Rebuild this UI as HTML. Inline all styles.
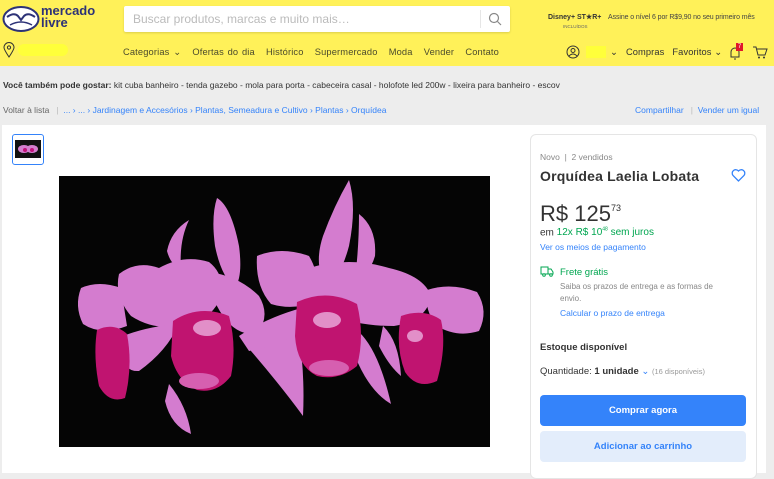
<!DOCTYPE html>
<html><head><meta charset="utf-8"><style>
*{margin:0;padding:0;box-sizing:border-box}
body{width:774px;height:473px;overflow:hidden;background:#ededed;font-family:"Liberation Sans",sans-serif;position:relative;color:#333}
.hdr{position:absolute;left:0;top:0;width:774px;height:66px;background:#fff159}
.a{position:absolute;white-space:nowrap}
.search{position:absolute;left:124px;top:6px;width:386px;height:26px;background:#fff;border-radius:2px;box-shadow:0 1px 2px rgba(0,0,0,.15)}
.nav{font-size:9.3px;color:#4b4b2c}
.panel{position:absolute;left:2px;top:125px;width:764px;height:348px;background:#fff}
.card{position:absolute;left:530px;top:134px;width:227px;height:345px;border:1px solid #e5e5e5;border-radius:6px;background:#fff}
.blue{color:#3483fa}
</style></head><body>
<div class="hdr"></div>
<svg class="a" style="left:2px;top:5px" width="38" height="28" viewBox="0 0 38 28"><ellipse cx="19" cy="14" rx="17.5" ry="12" fill="#fff" stroke="#2d3277" stroke-width="2"/><path d="M5 12 Q12 7 16 11 L19 15 L22 11 Q26 7 33 12" fill="none" stroke="#2d3277" stroke-width="2"/><path d="M8 20 Q19 14 30 20" fill="none" stroke="#2d3277" stroke-width="1.5"/></svg>
<div class="a" style="left:41px;top:5px;font-size:13px;line-height:12px;color:#2d3277;font-weight:bold">mercado<br>livre</div>
<div class="search"><span class="a" style="left:9px;top:6px;font-size:12px;color:#bbb">Buscar produtos, marcas e muito mais…</span><div class="a" style="left:356px;top:4px;width:1px;height:18px;background:#e6e6e6"></div><svg class="a" style="left:364px;top:6px" width="14" height="14"><circle cx="6" cy="6" r="4.5" fill="none" stroke="#888" stroke-width="1.2"/><path d="M9.5 9.5 L13 13" stroke="#888" stroke-width="1.2"/></svg></div>
<div class="a" style="left:548px;top:13px;font-size:7px;color:#333;font-weight:bold">Disney+ ST★R+</div>
<div class="a" style="left:563px;top:24px;font-size:4.5px;color:#666">INCLUÍDOS</div>
<div class="a" style="left:608px;top:14px;font-size:7px;color:#444;letter-spacing:-.1px">Assine o nível 6 por R$9,90 no seu primeiro mês</div>
<svg class="a" style="left:3px;top:42px" width="12" height="16"><path d="M6 15 C2 9 1 7 1 5.5 A5 5 0 0 1 11 5.5 C11 7 10 9 6 15Z" fill="none" stroke="#333" stroke-width="1"/><circle cx="6" cy="5.5" r="1.6" fill="none" stroke="#333"/></svg>
<div class="a" style="left:18px;top:44px;width:50px;height:12px;background:#ffff3a;border-radius:6px"></div>
<div class="a nav" style="left:123px;top:47px;letter-spacing:.15px;word-spacing:1px">Categorias ⌄ &nbsp;&nbsp;Ofertas do dia &nbsp;&nbsp;Histórico &nbsp;&nbsp;Supermercado &nbsp;&nbsp;Moda &nbsp;&nbsp;Vender &nbsp;&nbsp;Contato</div>
<svg class="a" style="left:566px;top:45px" width="14" height="14"><circle cx="7" cy="7" r="6" fill="none" stroke="#333"/><circle cx="7" cy="5.5" r="2" fill="none" stroke="#333"/><path d="M3 11 Q7 7 11 11" fill="none" stroke="#333"/></svg>
<div class="a" style="left:586px;top:46px;width:20px;height:12px;background:#ffff3a"></div>
<div class="a nav" style="left:610px;top:47px;color:#333;letter-spacing:.1px">⌄ &nbsp;&nbsp;Compras &nbsp;&nbsp;Favoritos ⌄</div>
<svg class="a" style="left:728px;top:46px" width="14" height="14"><path d="M3 11 L3 6 A4 4 0 0 1 11 6 L11 11 Z M6 13 L8 13" fill="none" stroke="#333"/></svg>
<div class="a" style="left:736px;top:43px;width:7px;height:8px;background:#e0162b;color:#fff;font-size:6px;text-align:center;line-height:8px">7</div>
<svg class="a" style="left:752px;top:45px" width="16" height="14"><path d="M1 2 L4 2 L6 10 L13 10 L15 4 L5 4" fill="none" stroke="#333"/><circle cx="7" cy="12.5" r="1" fill="#333"/><circle cx="12" cy="12.5" r="1" fill="#333"/></svg>
<div class="a" style="left:3px;top:80px;font-size:8.5px;color:#333"><b>Você também pode gostar:</b> kit cuba banheiro - tenda gazebo - mola para porta - cabeceira casal - holofote led 200w - lixeira para banheiro - escov</div>
<div class="a" style="left:3px;top:105px;font-size:8.5px;color:#666">Voltar à lista &nbsp;&nbsp;<span style="color:#bbb">|</span> &nbsp;<span class="blue">... › ... › Jardinagem e Accesórios › Plantas, Semeadura e Cultivo › Plantas › Orquídea</span></div>
<div class="a blue" style="left:635px;top:105px;font-size:8.5px">Compartilhar &nbsp;&nbsp;<span style="color:#bbb">|</span>&nbsp; Vender um igual</div>
<div class="panel"></div>
<div class="a" style="left:12px;top:134px;width:32px;height:31px;border:1px solid #3483fa;border-radius:3px;background:#fff"><div style="margin:5px 2px;width:26px;height:18px;background:#111"><svg width="26" height="18"><ellipse cx="9" cy="9" rx="6" ry="4" fill="#d47fcf"/><ellipse cx="17" cy="9" rx="6" ry="4" fill="#d47fcf"/><circle cx="10" cy="10" r="2" fill="#c2137a"/><circle cx="17" cy="10" r="2" fill="#c2137a"/></svg></div></div>
<svg class="a" style="left:59px;top:176px" width="431" height="271" viewBox="0 0 431 271">
<rect width="431" height="271" fill="#050505"/>
<g fill="#d47ccf">
<path d="M158 22 Q172 30 180 70 Q184 100 176 112 Q162 100 156 70 Q152 40 158 22Z"/>
<path d="M130 44 Q112 55 108 75 Q112 90 122 92 Q120 65 130 44Z"/>
<path d="M290 4 Q298 30 290 70 Q282 100 268 112 Q254 90 264 60 Q275 30 290 4Z"/>
<path d="M300 38 Q318 52 316 80 Q310 100 296 104 Q300 70 300 38Z"/>
<path d="M60 98 Q78 84 100 92 Q125 78 150 86 Q168 100 160 125 Q150 145 125 150 Q95 155 72 140 Q55 120 60 98Z"/>
<path d="M22 112 Q40 104 62 112 L68 150 Q42 160 24 148 Q15 130 22 112Z"/>
<path d="M150 96 Q180 100 200 120 Q212 140 198 158 Q178 160 164 140 Q150 120 150 96Z"/>
<path d="M198 80 Q222 70 250 80 Q262 100 258 125 Q235 135 212 128 Q196 110 198 80Z"/>
<path d="M250 92 Q290 80 330 92 Q365 100 372 120 Q368 145 335 150 Q300 150 276 140 Q250 120 250 92Z"/>
<path d="M368 114 Q392 106 418 116 Q430 135 420 155 Q398 162 378 150 Q365 135 368 114Z"/>
<path d="M64 160 Q90 150 120 148 Q108 175 80 195 Q66 196 64 180Z"/>
<path d="M192 156 Q215 150 240 158 Q246 200 244 240 Q222 210 192 175Z"/>
<path d="M180 160 Q210 140 250 130 L252 150 Q222 170 190 175Z"/>
<path d="M110 208 Q128 230 132 258 Q112 250 106 225Z"/>
<path d="M300 156 Q320 175 332 228 Q310 215 296 180Z"/>
<path d="M324 150 Q340 165 342 200 Q330 190 320 170Z"/>
</g>
<g fill="#c01470">
<path d="M114 145 Q140 128 170 140 Q178 170 172 200 Q158 218 138 214 Q118 205 112 180 Z"/>
<path d="M238 126 Q268 112 298 128 Q306 160 298 190 Q280 205 258 200 Q238 190 236 160 Z"/>
<path d="M38 154 Q55 146 68 158 Q74 190 66 222 Q50 228 40 210 Q34 180 38 154Z"/>
<path d="M342 140 Q365 132 382 144 Q388 170 378 205 Q358 214 346 196 Q336 170 342 140Z"/>
</g>
<g fill="#e28fc8"><ellipse cx="148" cy="152" rx="14" ry="8"/><ellipse cx="268" cy="144" rx="14" ry="8"/><ellipse cx="356" cy="160" rx="8" ry="6"/></g>
<g fill="#d65fb0"><ellipse cx="140" cy="205" rx="20" ry="8"/><ellipse cx="270" cy="192" rx="20" ry="8"/></g>
</svg>
<div class="card"></div>
<div class="a" style="left:540px;top:152px;font-size:8.5px;color:#888">Novo &nbsp;|&nbsp; 2 vendidos</div>
<div class="a" style="left:540px;top:168px;font-size:14px;color:#333;font-weight:bold;letter-spacing:.2px">Orquídea Laelia Lobata</div>
<svg class="a" style="left:731px;top:168px" width="15" height="14"><path d="M7.5 13 L2 7.5 A3.3 3.3 0 0 1 7.5 3 A3.3 3.3 0 0 1 13 7.5Z" fill="none" stroke="#3483fa" stroke-width="1.3"/></svg>
<div class="a" style="left:540px;top:201px;font-size:22px;color:#333">R$ 125<sup style="font-size:9px;position:relative;top:-2px">73</sup></div>
<div class="a" style="left:540px;top:227px;font-size:10px;color:#333">em <span style="color:#00a650">12x R$ 10<sup style="font-size:5px">48</sup> sem juros</span></div>
<div class="a blue" style="left:540px;top:242px;font-size:8.5px">Ver os meios de pagamento</div>
<svg class="a" style="left:540px;top:266px" width="14" height="11"><path d="M1 1 H8 V8 H1Z M8 3 H11 L13 6 V8 H8" fill="none" stroke="#00a650"/><circle cx="4" cy="9" r="1.3" fill="#fff" stroke="#00a650"/><circle cx="11" cy="9" r="1.3" fill="#fff" stroke="#00a650"/></svg>
<div class="a" style="left:560px;top:267px;font-size:9.5px;color:#00a650">Frete grátis</div>
<div class="a" style="left:560px;top:281px;font-size:8px;color:#888;line-height:12px">Saiba os prazos de entrega e as formas de<br>envio.</div>
<div class="a blue" style="left:560px;top:308px;font-size:8.5px">Calcular o prazo de entrega</div>
<div class="a" style="left:540px;top:342px;font-size:9.5px;color:#333;font-weight:bold">Estoque disponível</div>
<div class="a" style="left:540px;top:366px;font-size:9.5px;color:#333">Quantidade: <b>1 unidade</b> <span class="blue">⌄</span> <span style="font-size:7.5px;color:#999">(16 disponíveis)</span></div>
<div class="a" style="left:540px;top:395px;width:206px;height:31px;background:#3483fa;border-radius:4px;color:#fff;font-size:9.5px;font-weight:bold;text-align:center;line-height:31px">Comprar agora</div>
<div class="a" style="left:540px;top:431px;width:206px;height:31px;background:#e3edfb;border-radius:4px;color:#3483fa;font-size:9.5px;font-weight:bold;text-align:center;line-height:31px">Adicionar ao carrinho</div>
</body></html>
